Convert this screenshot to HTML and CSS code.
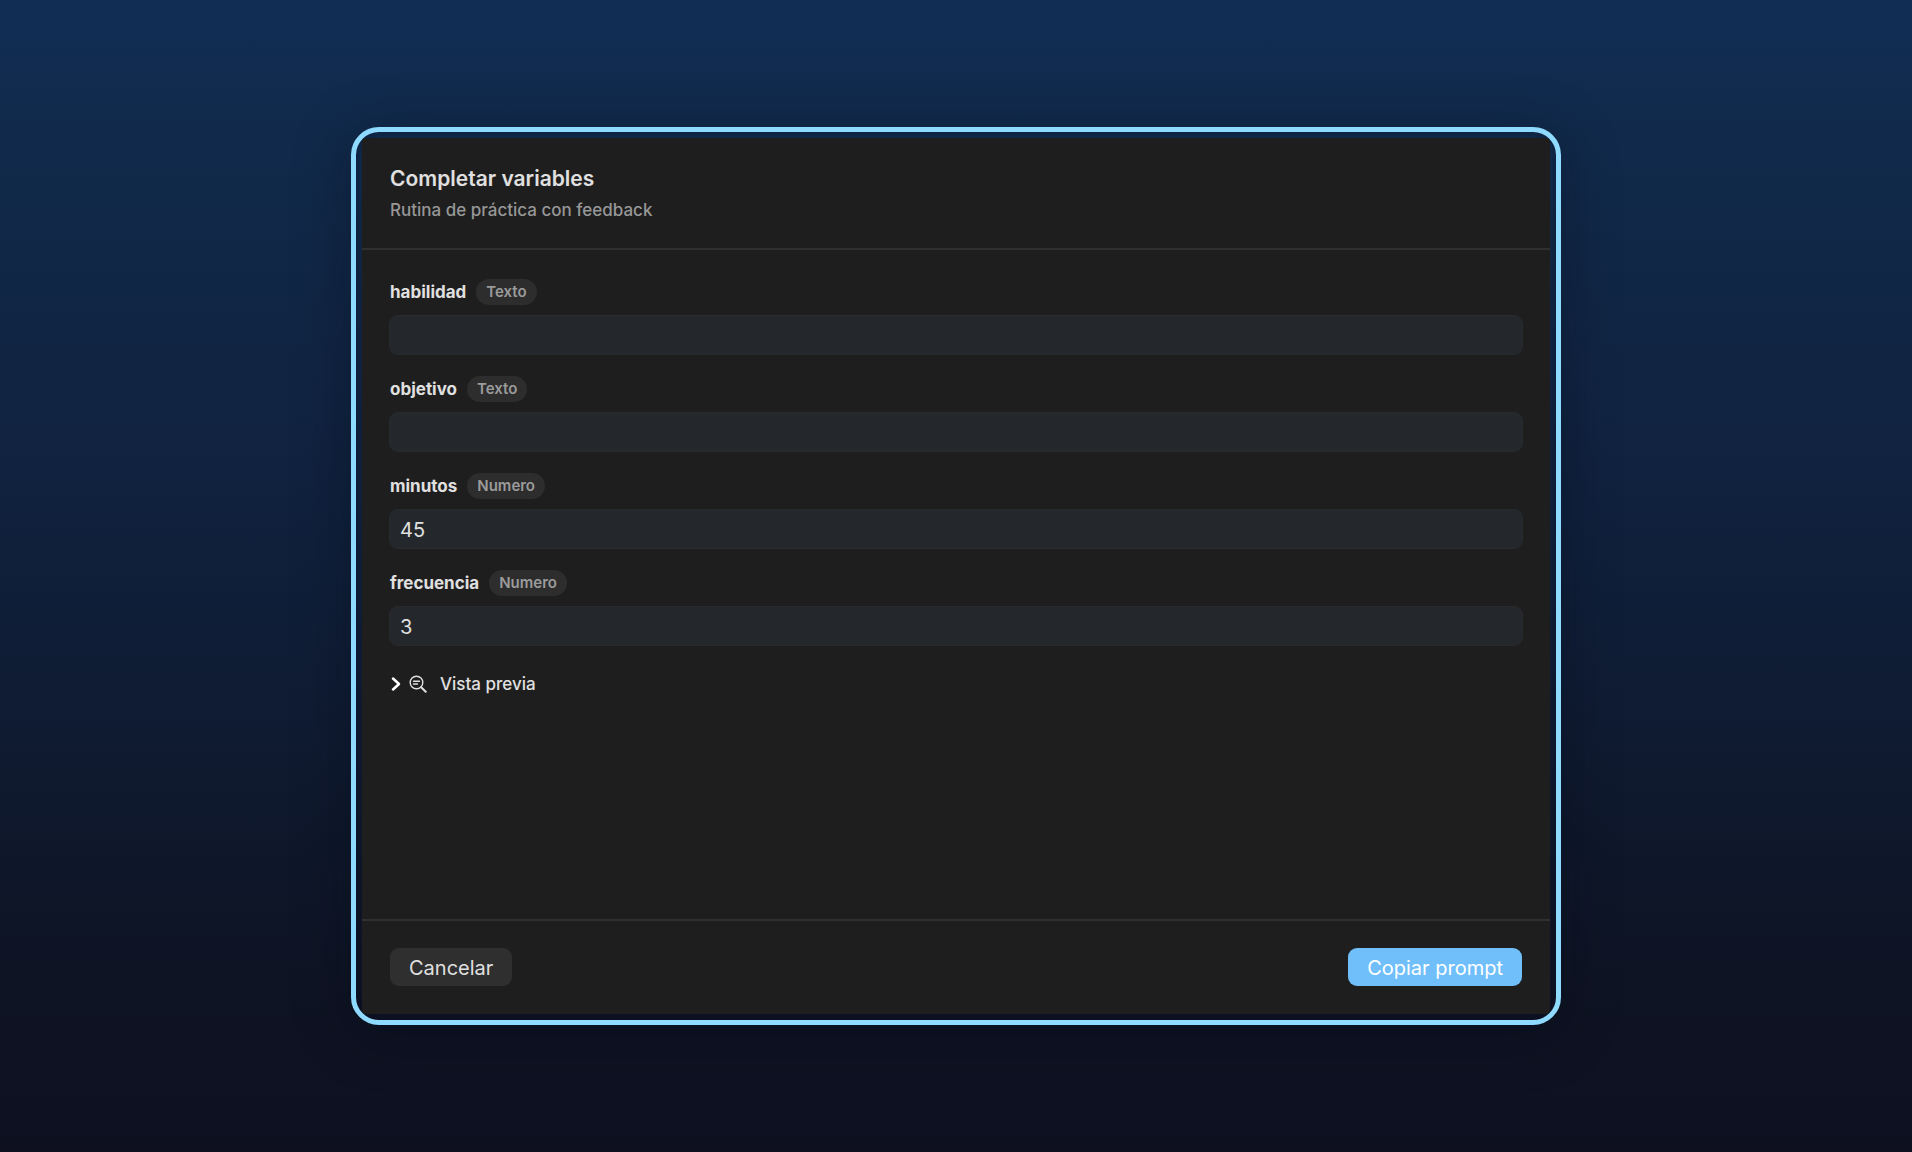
FILE: index.html
```html
<!DOCTYPE html>
<html lang="es">
<head>
<meta charset="utf-8">
<title>Completar variables</title>
<link rel="stylesheet" href="styles.css">
</head>
<body>
<main class="frame">
  <form class="panel">
    <header class="header">
      <h1 class="title">Completar variables</h1>
      <p class="subtitle">Rutina de práctica con feedback</p>
    </header>
    <div class="content">
      <div class="field">
        <div class="field-head"><label class="name" for="habilidad">habilidad</label><span class="chip">Texto</span></div>
        <input class="input" id="habilidad" type="text">
      </div>
      <div class="field">
        <div class="field-head"><label class="name" for="objetivo">objetivo</label><span class="chip">Texto</span></div>
        <input class="input" id="objetivo" type="text">
      </div>
      <div class="field">
        <div class="field-head"><label class="name" for="minutos">minutos</label><span class="chip">Numero</span></div>
        <input class="input" id="minutos" type="text" inputmode="numeric" value="45">
      </div>
      <div class="field">
        <div class="field-head"><label class="name" for="frecuencia">frecuencia</label><span class="chip">Numero</span></div>
        <input class="input" id="frecuencia" type="text" inputmode="numeric" value="3">
      </div>
      <button class="preview" type="button" aria-expanded="false">
        <svg class="chevron" width="10" height="16" viewBox="0 0 10 16" aria-hidden="true"><path d="M2 2.500l6 5.500-6 5.500"/></svg>
        <svg class="lens" width="18" height="18" viewBox="0 0 18 18" aria-hidden="true"><circle cx="7.500" cy="7.500" r="6.300"/><path d="M4.500 6.300h6M4.500 9h4"/><path class="handle" d="M12.200 12.200l4.500 4.500"/></svg>
        <span>Vista previa</span>
      </button>
    </div>
    <footer class="footer">
      <button class="button" type="button">Cancelar</button>
      <button class="button primary" type="submit">Copiar prompt</button>
    </footer>
  </form>
</main>
</body>
</html>
```

FILE: styles.css
```css
* {
  box-sizing: border-box;
}

body {
  margin: 0;
  min-height: 100vh;
  padding: 24px;
  display: grid;
  place-items: center;
  background: linear-gradient(#112d54, #112a4b 12%, #10213d 44%, #0f1a30 66%, #0e1424 84%, #0e1020);
  font-family: Inter, "Liberation Sans", sans-serif;
  color: #e0e0e0;
}

.frame {
  width: 100%;
  max-width: 1210px;
  min-height: 78vh;
  display: flex;
  padding: 6px;
  border: 5px solid #8fdbff;
  border-radius: 28px;
  box-shadow: 0 8px 56px rgba(4, 8, 20, 0.35), inset 0 0 12px rgba(4, 8, 20, 0.3);
}

.panel {
  flex: 1;
  display: flex;
  flex-direction: column;
  background: #1e1e1e;
  border-radius: 4px;
}

.header {
  padding: 28px 28px 26px;
  border-bottom: 2px solid #2f2f2f;
}

.title {
  margin: 0;
  font-size: 21px;
  line-height: 26px;
  font-weight: 600;
}

.subtitle {
  margin: 6px 0 0;
  font-size: 17px;
  line-height: 24px;
  font-weight: 500;
  color: #979797;
}

.content {
  flex: 1;
  display: flex;
  flex-direction: column;
  align-items: stretch;
  gap: 21px;
  padding: 29px 27px 20px;
}

.field {
  display: flex;
  flex-direction: column;
  gap: 10px;
}

.field-head {
  display: flex;
  align-items: center;
  gap: 10px;
  padding-left: 1px;
}

.name {
  font-size: 17px;
  line-height: 26px;
  font-weight: 700;
}

.chip {
  padding: 0 10px;
  border-radius: 13px;
  background: #2d2d2d;
  color: #9b9b9b;
  font-size: 15px;
  line-height: 26px;
  font-weight: 600;
}

.input {
  width: 100%;
  height: 40px;
  padding: 2px 10px 0;
  border: 1px solid #292a2b;
  border-radius: 9px;
  background: #24272b;
  color: #e0e0e0;
  font: 400 20px/24px Inter, "Liberation Sans", sans-serif;
}

.preview {
  align-self: flex-start;
  display: flex;
  align-items: center;
  gap: 8px;
  padding: 5px 2px;
  border: 0;
  background: none;
  color: #e0e0e0;
  font: 500 17px/24px Inter, "Liberation Sans", sans-serif;
}

.preview span {
  padding-left: 5px;
}

.preview svg {
  fill: none;
  stroke: #e0e0e0;
  stroke-linecap: round;
  stroke-linejoin: round;
}

.preview .chevron {
  stroke: #fff;
  stroke-width: 2.5;
}

.lens {
  stroke-width: 1.4;
}

.handle {
  stroke-width: 2;
}

.footer {
  display: flex;
  justify-content: space-between;
  padding: 27px 28px 28px;
  border-top: 2px solid #2f2f2f;
}

.button {
  height: 38px;
  padding: 1px 19px 0;
  border: 0;
  border-radius: 9px;
  background: #2f2f2f;
  color: #e0e0e0;
  font: 400 20px/24px Inter, "Liberation Sans", sans-serif;
}

.primary {
  background: #70bffb;
  color: #fff;
}
```
